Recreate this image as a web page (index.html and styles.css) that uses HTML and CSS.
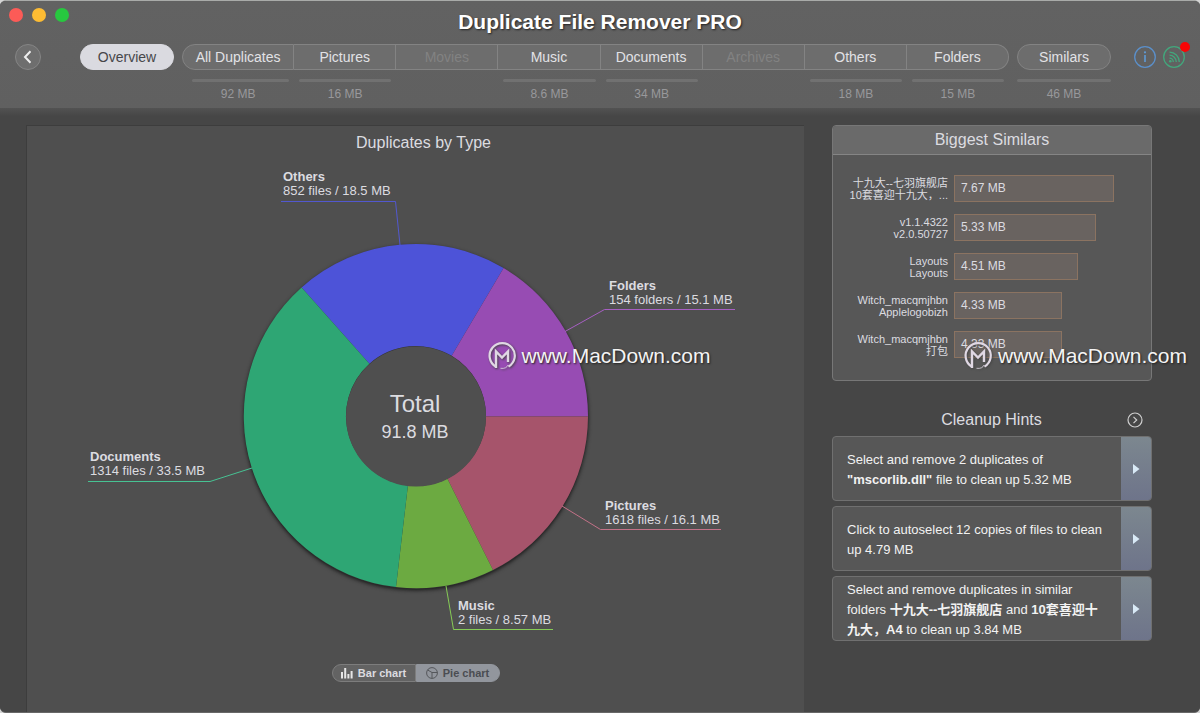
FILE: index.html
```html
<!DOCTYPE html>
<html lang="en">
<head>
<meta charset="utf-8">
<title>Duplicate File Remover PRO</title>
<link rel="stylesheet" href="styles.css">
</head>
<body>
<svg class="defs" width="0" height="0" aria-hidden="true">
  <symbol id="mark" viewBox="0 0 30 30">
    <path d="M8.700 25.500A12.600 12.600 0 1 1 21.500 25.600" fill="none" stroke="currentColor" stroke-width="2.200"/>
    <path d="M9 27V10.500L15 16.500l6-6V21" fill="none" stroke="currentColor" stroke-width="2.400" stroke-linejoin="miter"/>
    <path d="M13.500 27.300c4 .6 6.500-.8 7.500-3.300" fill="none" stroke="currentColor" stroke-width="0.800"/>
  </symbol>
</svg>
<div class="window">
  <header class="header">
    <div class="titlebar">
      <div class="lights"><i class="light light-close"></i><i class="light light-min"></i><i class="light light-max"></i></div>
      <h1 class="app-title">Duplicate File Remover PRO</h1>
    </div>
    <div class="toolbar">
      <button class="back" aria-label="Back"><svg width="24" height="24" viewBox="0 0 24 24"><path d="M14.500 6.300 9 12l5.500 5.700" fill="none" stroke="#eee" stroke-width="2"/></svg></button>
      <nav class="tabs">
        <div class="tab tab-single"><button class="tab-button active">Overview</button></div>
        <div class="segments">
          <div class="tab first"><button class="tab-button">All Duplicates</button><span class="meter"></span><span class="size">92 MB</span></div>
          <div class="tab"><button class="tab-button">Pictures</button><span class="meter"></span><span class="size">16 MB</span></div>
          <div class="tab"><button class="tab-button" disabled>Movies</button></div>
          <div class="tab"><button class="tab-button">Music</button><span class="meter"></span><span class="size">8.6 MB</span></div>
          <div class="tab"><button class="tab-button">Documents</button><span class="meter"></span><span class="size">34 MB</span></div>
          <div class="tab"><button class="tab-button" disabled>Archives</button></div>
          <div class="tab"><button class="tab-button">Others</button><span class="meter"></span><span class="size">18 MB</span></div>
          <div class="tab last"><button class="tab-button">Folders</button><span class="meter"></span><span class="size">15 MB</span></div>
        </div>
        <div class="tab tab-single"><button class="tab-button">Similars</button><span class="meter"></span><span class="size">46 MB</span></div>
      </nav>
      <div class="tools">
        <button class="tool" aria-label="Information"><svg width="22" height="22" viewBox="0 0 22 22"><circle cx="11" cy="11" r="10.300" fill="none" stroke="#5b8fc9" stroke-width="1.300"/><path d="M11 9v7" stroke="#5e9ad6" stroke-width="1.600"/><circle cx="11" cy="6.300" r="1.100" fill="#5e9ad6"/></svg></button>
        <button class="tool" aria-label="News"><svg width="22" height="22" viewBox="0 0 22 22"><g fill="none" stroke="#43a67c" stroke-width="1.300"><circle cx="11" cy="11" r="10.300"/><path d="M6.500 12.200a3.800 3.800 0 0 1 3.800 3.800M6.500 9.200a6.800 6.800 0 0 1 6.800 6.800M6.500 6.200a9.800 9.800 0 0 1 9.800 9.800"/></g><circle cx="7.300" cy="15.200" r="1.300" fill="#43a67c"/></svg><i class="dot"></i></button>
      </div>
    </div>
  </header>

  <div class="body">
    <main class="chart-panel">
      <h2 class="chart-title">Duplicates by Type</h2>
      <svg class="chart" viewBox="27 160 777 480" role="img" aria-label="Duplicates by type">
        <circle class="ring-shadow" cx="416" cy="417" r="172"/>
        <path fill="#4d53d8" d="M301.600 287.500A172 172 0 0 1 503.600 268L451.700 355.800A70 70 0 0 0 369.400 363.700Z"/>
        <path fill="#974cb3" d="M503.600 268A172 172 0 0 1 588 416.500L486 416.500A70 70 0 0 0 451.700 355.800Z"/>
        <path fill="#a6546b" d="M588 416.500A172 172 0 0 1 493 570L447.300 478.600A70 70 0 0 0 486 416.500Z"/>
        <path fill="#6caa41" d="M493 570A172 172 0 0 1 396 587L407.900 485.500A70 70 0 0 0 447.300 478.600Z"/>
        <path fill="#2ea674" d="M396 587A172 172 0 0 1 301.600 287.500L369.400 363.700A70 70 0 0 0 407.900 485.500Z"/>
        <circle cx="416" cy="416.500" r="70" fill="#4f4f4f"/>
        <g class="leaders">
          <path stroke="#5258cf" d="M281 201.500H395.500L400 245"/>
          <path stroke="#a65fc2" d="M735 309.500H604.500L565 331.500"/>
          <path stroke="#c27288" d="M721 529.500H600.500L562 506"/>
          <path stroke="#86cc56" d="M553 629.500H453.500L446 586"/>
          <path stroke="#47c293" d="M88 481.500H210L252 468"/>
        </g>
        <g class="labels">
          <text x="283" y="181" class="label-name">Others</text><text x="283" y="195">852 files / 18.5 MB</text>
          <text x="609" y="290" class="label-name">Folders</text><text x="609" y="304">154 folders / 15.1 MB</text>
          <text x="605" y="510" class="label-name">Pictures</text><text x="605" y="524">1618 files / 16.1 MB</text>
          <text x="458" y="610" class="label-name">Music</text><text x="458" y="624">2 files / 8.57 MB</text>
          <text x="90" y="461" class="label-name">Documents</text><text x="90" y="475">1314 files / 33.5 MB</text>
        </g>
        <text x="415" y="412" class="total-name">Total</text>
        <text x="415" y="438" class="total-value">91.8 MB</text>
      </svg>
      <div class="chart-switch">
        <button class="switch-button"><svg width="12" height="12" viewBox="0 0 12 12"><path d="M1 11.500V5M4.200 11.500V1M7.400 11.500V7M10.600 11.500V4" stroke="#e6e6e6" stroke-width="2"/></svg>Bar chart</button>
        <button class="switch-button selected"><svg width="12" height="12" viewBox="0 0 12 12"><g fill="none" stroke="#55575b" stroke-width="1"><circle cx="6" cy="6" r="5.400"/><path d="M1.700 3 6 5.500h5.300M6 5.500v5.800"/></g></svg>Pie chart</button>
      </div>
      <div class="watermark watermark-chart"><svg width="30" height="30"><use href="#mark"/></svg>www.MacDown.com</div>
    </main>

    <aside class="side">
      <section class="similars">
        <h2 class="similars-title">Biggest Similars</h2>
        <div class="similars-list">
          <div class="pair">十九大--七羽旗舰店<br>10套喜迎十九大，...</div><div class="bar" style="width:81%">7.67 MB</div>
          <div class="pair">v1.1.4322<br>v2.0.50727</div><div class="bar" style="width:72%">5.33 MB</div>
          <div class="pair">Layouts<br>Layouts</div><div class="bar" style="width:63%">4.51 MB</div>
          <div class="pair">Witch_macqmjhbn<br>Applelogobizh</div><div class="bar" style="width:55%">4.33 MB</div>
          <div class="pair">Witch_macqmjhbn<br>打包</div><div class="bar" style="width:55%">4.33 MB</div>
        </div>
      </section>
      <section class="hints">
        <div class="hints-head">
          <h2 class="hints-title">Cleanup Hints</h2>
          <button class="more" aria-label="More hints"><svg width="16" height="16" viewBox="0 0 16 16"><g fill="none" stroke="#cfcfcf" stroke-width="1.200"><circle cx="8" cy="8" r="7"/><path d="M6.500 4.800 9.700 8l-3.200 3.200"/></g></svg></button>
        </div>
        <div class="hint"><p class="hint-text">Select and remove 2 duplicates of <b>"mscorlib.dll"</b> file to clean up 5.32 MB</p><button class="go" aria-label="Open hint"><svg width="7" height="10" viewBox="0 0 7 10"><path d="M0 0l6.500 5L0 10z" fill="#d9eaf7"/></svg></button></div>
        <div class="hint"><p class="hint-text">Click to autoselect 12 copies of files to clean up 4.79 MB</p><button class="go" aria-label="Open hint"><svg width="7" height="10" viewBox="0 0 7 10"><path d="M0 0l6.500 5L0 10z" fill="#d9eaf7"/></svg></button></div>
        <div class="hint"><p class="hint-text">Select and remove duplicates in similar folders <b>十九大--七羽旗舰店</b> and <b>10套喜迎十九大，A4</b> to clean up 3.84 MB</p><button class="go" aria-label="Open hint"><svg width="7" height="10" viewBox="0 0 7 10"><path d="M0 0l6.500 5L0 10z" fill="#d9eaf7"/></svg></button></div>
      </section>
      <div class="watermark watermark-side"><svg width="30" height="30"><use href="#mark"/></svg>www.MacDown.com</div>
    </aside>
  </div>
</div>
</body>
</html>
```

FILE: styles.css
```css
* { box-sizing: border-box; }
body {
  margin: 0;
  background: #d5d5d5;
  color: #dcdce0;
  font-family: "Liberation Sans", "Noto Sans CJK SC", sans-serif;
}
h1, h2, p { margin: 0; font-weight: 400; }
button {
  margin: 0;
  padding: 0;
  border: 0;
  background: none;
  color: inherit;
  font: inherit;
}
svg { display: block; flex: none; }
.defs { position: absolute; }

.window {
  display: flex;
  flex-direction: column;
  min-height: 100vh;
  overflow: hidden;
  border-top: 1px solid #a9aba9;
  border-bottom: 1px solid #686868;
  border-radius: 6px;
  background: #464646;
}

/* Header */
.header {
  padding: 0 15px;
  background: linear-gradient(#626262, #606060);
}
.titlebar {
  display: grid;
  grid-template-columns: 1fr auto 1fr;
  height: 43px;
}
.lights { display: flex; gap: 9px; padding-top: 7px; margin-left: -6px; }
.light { width: 14px; height: 14px; border-radius: 50%; }
.light-close { background: #fc5b57; }
.light-min { background: #fdbc33; }
.light-max { background: #27c83f; }
.app-title {
  padding-top: 7px;
  color: #fff;
  font-size: 21px;
  line-height: 28px;
  font-weight: 700;
  text-shadow: 1px 1px 2px #222;
}
.toolbar { display: flex; align-items: flex-start; height: 64px; }
.back {
  display: grid;
  place-items: center;
  width: 26px;
  height: 26px;
  margin-right: 39px;
  border: 1px solid #858585;
  border-radius: 50%;
  background: #6e6e6e;
}
.tabs { display: flex; flex: 1; gap: 8px; }
.segments { display: flex; flex: 1; }
.segments .tab { flex: 1 1 102px; }
.segments .first { flex-basis: 112px; }
.tab { display: flex; flex-direction: column; }
.tab-single { width: 94px; }
.tab-button {
  height: 26px;
  padding-top: 1px;
  border: 1px solid #838383;
  border-left-width: 0;
  background: #6d6d6d;
  color: #e2e2e6;
  font-size: 14px;
  line-height: 23px;
}
.tab-button:disabled { color: #828282; }
.first .tab-button { border-left-width: 1px; border-radius: 13px 0 0 13px; }
.last .tab-button { border-radius: 0 13px 13px 0; }
.tab-single .tab-button { border-left-width: 1px; border-radius: 13px; }
.tab-button.active { border-color: #dadae0; background: #dadae0; color: #47474a; }
.meter { height: 3px; margin: 9px 5px 5px; border-radius: 2px; background: #717171; }
.first .meter { margin-left: 10px; }
.tab-single .meter { margin-left: 0; margin-right: 0; }
.size { color: #98989b; font-size: 12px; line-height: 14px; text-align: center; }
.tools { display: flex; gap: 7px; padding-top: 2px; margin-left: 23px; }
.tool { position: relative; }
.dot {
  position: absolute;
  top: -4px;
  right: -5px;
  width: 10px;
  height: 10px;
  border-radius: 50%;
  background: #f90505;
}

/* Body */
.body {
  display: flex;
  flex: 1;
  gap: 28px;
  padding: 17px 48px 0 26px;
  background: linear-gradient(#525252, #464646 8px);
}
.chart-panel {
  position: relative;
  flex: 1;
  min-width: 0;
  border: 1px solid #3d3d3d;
  border-right: 0;
  border-bottom: 0;
  background: #4f4f4f;
}
.chart-title {
  padding: 5px 0 5px 16px;
  font-size: 16px;
  line-height: 24px;
  text-align: center;
}
.chart { width: 100%; height: 480px; }
.ring-shadow { fill: #333; filter: drop-shadow(0 1px 2px #111); }
.leaders { fill: none; stroke-width: 1; }
.labels { fill: #dcdce0; font-size: 13px; }
.label-name { font-weight: 700; }
.total-name, .total-value { fill: #dcdce0; text-anchor: middle; }
.total-name { font-size: 24px; }
.total-value { font-size: 18px; }
.chart-switch { display: flex; justify-content: center; margin-top: 24px; }
.switch-button {
  display: flex;
  align-items: center;
  justify-content: center;
  gap: 5px;
  width: 84px;
  height: 18px;
  border: 1px solid #7d7d7d;
  border-radius: 9px 0 0 9px;
  background: #636363;
  font-size: 11px;
  font-weight: 700;
}
.switch-button.selected {
  border-color: #92969d;
  border-radius: 0 9px 9px 0;
  background: #92969d;
  color: #4b4d52;
}

/* Side column */
.side { position: relative; width: 320px; }
.similars { border: 1px solid #777; border-radius: 4px; background: #575757; }
.similars-title {
  border-bottom: 1px solid #858585;
  border-radius: 3px 3px 0 0;
  background: #6a6a6a;
  font-size: 16px;
  line-height: 28px;
  text-align: center;
}
.similars-list {
  display: grid;
  grid-template-columns: 115px 1fr;
  column-gap: 6px;
  row-gap: 12px;
  align-items: center;
  padding: 20px 0 22px;
}
.pair { font-size: 11px; line-height: 12px; text-align: right; white-space: nowrap; }
.bar {
  height: 27px;
  padding-left: 6px;
  border: 1px solid #8b7361;
  background: #696360;
  font-size: 12px;
  line-height: 25px;
}
.hints-head {
  display: grid;
  grid-template-columns: 1fr auto 1fr;
  align-items: center;
  padding: 27px 9px 5px 8px;
}
.hints-title { grid-column: 2; font-size: 16px; line-height: 23px; }
.more { justify-self: end; }
.hint {
  display: flex;
  height: 65px;
  margin-bottom: 5px;
  overflow: hidden;
  border: 1px solid #707070;
  border-radius: 4px;
  background: #575757;
}
.hint-text {
  flex: 1;
  align-self: center;
  padding: 2px 14px 0 14px;
  color: #f2f2f2;
  font-size: 13px;
  line-height: 20px;
}
.go {
  display: grid;
  place-items: center;
  width: 30px;
  background: linear-gradient(#7c878f, #6e748a);
}

.watermark {
  position: absolute;
  display: flex;
  align-items: center;
  gap: 5px;
  color: #f4f4f4;
  font-size: 21px;
  line-height: 30px;
  text-shadow: 1px 1px 2px #222;
  white-space: nowrap;
}
.watermark svg { color: #e0d8e4; filter: drop-shadow(1px 1px 1px #444); }
.watermark-chart { top: 215px; left: calc(50% + 71px); }
.watermark-side { top: 216px; left: 131px; }
```
